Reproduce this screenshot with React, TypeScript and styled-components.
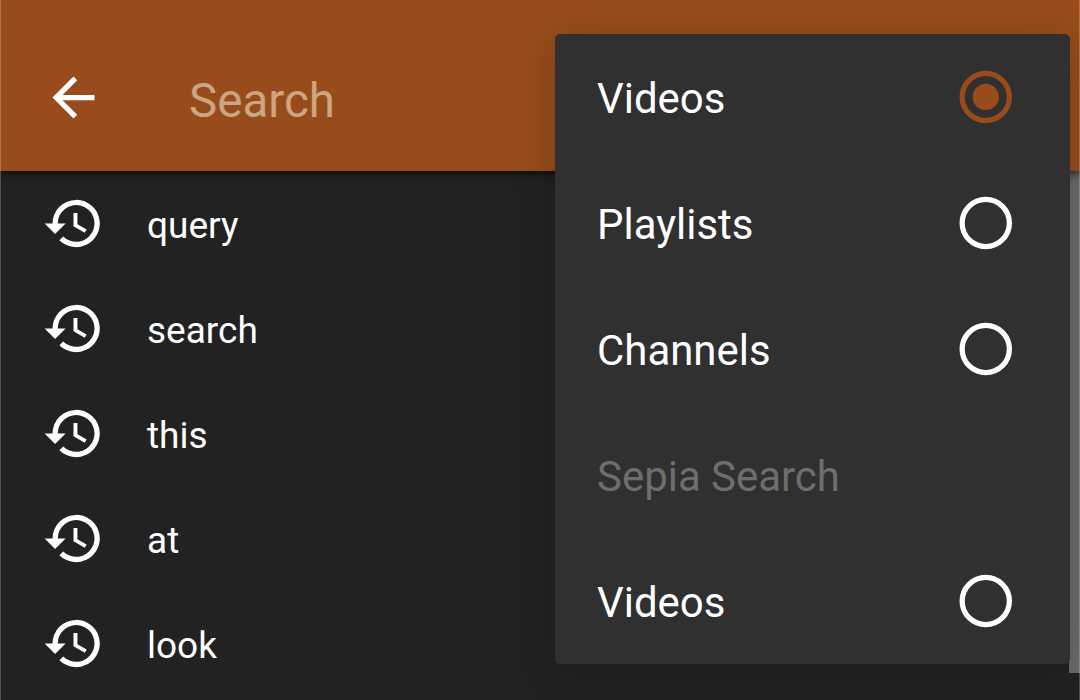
import React from 'react';
import styled, { createGlobalStyle } from 'styled-components';

const Global = createGlobalStyle`
  * { box-sizing: border-box; }
  body { margin: 0; background: #222222; font-family: Roboto, sans-serif; color: #fff; overflow: hidden; }
`;
const Screen = styled.main`
  position: relative;
  height: 700px;
  overflow: hidden;
  background: #222222;
  &::after {
    content: '';
    position: absolute;
    z-index: 3;
    inset: 0;
    border: solid rgba(255, 255, 255, 0.22);
    border-width: 0 1px;
  }
`;
const Toolbar = styled.header`
  display: flex;
  align-items: center;
  height: 171px;
  padding: 24px 0 0 42px;
  background: #984c1b;
  box-shadow: 0 3px 8px rgba(0, 0, 0, 0.65);
  position: relative;
  z-index: 1;
`;
const BackIcon = styled.svg`
  width: 63px;
  height: 63px;
  fill: #fff;
`;
const SearchHint = styled.span`
  margin: 6px 0 0 84px;
  font-size: 47.5px;
  line-height: 56px;
  color: #cca582;
`;
const History = styled.ul`
  margin: 0;
  padding: 0;
  list-style: none;
`;
const HistoryRow = styled.li`
  display: flex;
  align-items: center;
  gap: 42px;
  height: 105px;
  padding-left: 42px;
  font-size: 37px;
`;
const HistoryIcon = styled.svg`
  width: 63px;
  height: 63px;
  fill: #fff;
`;
const Query = styled.span`
  padding-top: 4px;
`;
const Scrollbar = styled.div`
  position: absolute;
  top: 171px;
  right: 0;
  width: 11px;
  height: 502px;
  background: #6b6b6b;
`;
const Menu = styled.div`
  position: absolute;
  z-index: 2;
  top: 34px;
  right: 10px;
  width: 515px;
  height: 630px;
  border-radius: 5px;
  background: #303030;
  box-shadow: 0 8px 42px rgba(0, 0, 0, 0.22);
`;
const MenuRow = styled.div<{ $heading?: boolean }>`
  display: flex;
  align-items: center;
  justify-content: space-between;
  height: 126px;
  padding: 0 53px 0 42px;
  font-size: 41.95px;
  color: ${(p) => (p.$heading ? '#6e6e6e' : '#fff')};
`;
const Label = styled.span`
  padding-top: 2px;
`;
const RadioIcon = styled.svg<{ $on?: boolean }>`
  width: 63px;
  height: 63px;
  color: ${(p) => (p.$on ? '#984c1b' : '#fff')};
`;

function Radio({ on }: { on?: boolean }) {
  return (
    <RadioIcon viewBox="0 0 24 24" $on={on}>
      <circle cx="12.1" cy="11.8" r="9" fill="none" stroke="currentColor" strokeWidth="2" />
      {on && <circle cx="12.1" cy="11.8" r="5" fill="currentColor" />}
    </RadioIcon>
  );
}

const queries = ['query', 'search', 'this', 'at', 'look'];
const options = [
  { label: 'Videos', on: true },
  { label: 'Playlists' },
  { label: 'Channels' },
  { label: 'Sepia Search', heading: true },
  { label: 'Videos' },
];

export default function App() {
  return (
    <Screen>
      <Global />
      <Toolbar>
        <BackIcon viewBox="0 0 24 24">
          <path d="M20 11H7.83l5.59-5.59L12 4l-8 8 8 8 1.41-1.41L7.83 13H20v-2z" />
        </BackIcon>
        <SearchHint>Search</SearchHint>
      </Toolbar>
      <History>
        {queries.map((q) => (
          <HistoryRow key={q}>
            <HistoryIcon viewBox="0 0 24 24">
              <path d="M13 3a9 9 0 0 0-9 9H1l3.89 3.89.07.14L9 12H6a7 7 0 1 1 2.06 4.94l-1.42 1.42A9 9 0 1 0 13 3zm-1 5v5l4.28 2.54.72-1.21-3.5-2.08V8H12z" />
            </HistoryIcon>
            <Query>{q}</Query>
          </HistoryRow>
        ))}
      </History>
      <Scrollbar />
      <Menu>
        {options.map((o, i) => (
          <MenuRow key={i} $heading={o.heading}>
            <Label>{o.label}</Label>
            {!o.heading && <Radio on={o.on} />}
          </MenuRow>
        ))}
      </Menu>
    </Screen>
  );
}
